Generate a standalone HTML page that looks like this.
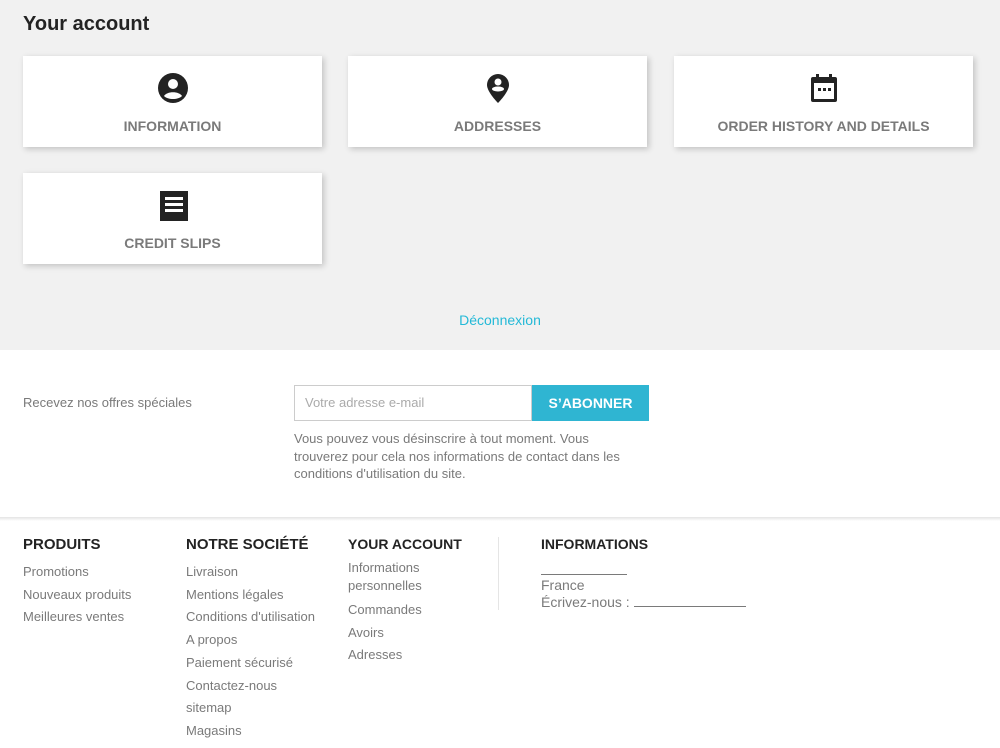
<!DOCTYPE html>
<html><head><meta charset="utf-8"><style>
*{margin:0;padding:0;box-sizing:border-box}
body{width:1000px;height:748px;overflow:hidden;font-family:"Liberation Sans",sans-serif;background:#fff;color:#7a7a7a}
.top{position:absolute;left:0;top:0;width:1000px;height:350px;background:#f1f1f1}
h1{position:absolute;left:23px;top:13px;font-size:20px;color:#232323;font-weight:bold}
.card{position:absolute;width:299px;height:91px;background:#fff;box-shadow:2px 2px 6px rgba(0,0,0,.2);text-align:center}
.card svg{position:absolute;left:50%;top:16px;margin-left:-16px}
.card span{position:absolute;left:0;right:0;top:62px;font-size:14px;font-weight:bold;color:#7a7a7a}
.link{position:absolute;left:0;width:1000px;top:312px;text-align:center;color:#24b9d7;font-size:14px}
.abs{position:absolute}
.ft h4{font-size:15px;color:#232323;font-weight:bold;margin-bottom:8px;white-space:nowrap}
.ft a{display:block;font-size:13px;color:#7a7a7a;line-height:22.7px}
</style></head><body>
<div class="top">
<h1>Your account</h1>
<div class="card" style="left:23px;top:56px"><svg width="32" height="32" viewBox="0 0 32 32"><circle cx="16" cy="16" r="15" fill="#232323"/><circle cx="16" cy="12" r="5" fill="#fff"/><path d="M7 24c3-5 15-5 18 0c-4 4-14 4-18 0z" fill="#fff"/></svg><span>INFORMATION</span></div>
<div class="card" style="left:348px;top:56px"><svg width="32" height="32" viewBox="0 0 32 32"><path d="M16 2a11 11 0 0 1 11 11c0 7-11 18-11 18S5 20 5 13A11 11 0 0 1 16 2z" fill="#232323"/><circle cx="16" cy="10" r="3.5" fill="#fff"/><ellipse cx="16" cy="17" rx="6" ry="2.5" fill="#fff"/></svg><span>ADDRESSES</span></div>
<div class="card" style="left:674px;top:56px"><svg width="32" height="32" viewBox="0 0 32 32"><rect x="3" y="5" width="26" height="25" rx="2" fill="#232323"/><rect x="6" y="11" width="20" height="16" fill="#fff"/><rect x="8" y="2" width="3" height="6" fill="#232323"/><rect x="21" y="2" width="3" height="6" fill="#232323"/><rect x="10" y="16" width="3" height="3" fill="#232323"/><rect x="15" y="16" width="3" height="3" fill="#232323"/><rect x="20" y="16" width="3" height="3" fill="#232323"/></svg><span>ORDER HISTORY AND DETAILS</span></div>
<div class="card" style="left:23px;top:173px"><svg width="32" height="32" viewBox="0 0 32 32"><rect x="3" y="2" width="28" height="30" fill="#232323"/><rect x="8" y="8" width="18" height="3" fill="#fff"/><rect x="8" y="14" width="18" height="3" fill="#fff"/><rect x="8" y="20" width="18" height="3" fill="#fff"/></svg><span>CREDIT SLIPS</span></div>
<div class="link">Déconnexion</div>
</div>
<div class="abs" style="left:23px;top:395px;font-size:13px;color:#7a7a7a">Recevez nos offres spéciales</div>
<div class="abs" style="left:294px;top:385px;width:238px;height:36px;border:1px solid #ccc;font-size:13px;color:#aaa;padding:9px 10px">Votre adresse e-mail</div>
<div class="abs" style="left:532px;top:385px;width:117px;height:36px;background:#2fb5d2;color:#fff;font-weight:bold;font-size:14px;text-align:center;line-height:36px">S’ABONNER</div>
<div class="abs" style="left:294px;top:430px;width:345px;font-size:13px;line-height:17.5px;color:#7a7a7a">Vous pouvez vous désinscrire à tout moment. Vous<br>trouverez pour cela nos informations de contact dans les<br>conditions d'utilisation du site.</div>
<div class="abs" style="left:0;top:517px;width:1000px;height:4px;background:linear-gradient(#e4e4e4,#fff)"></div>
<div class="abs ft" style="left:23px;top:536px"><h4>PRODUITS</h4><a>Promotions</a><a>Nouveaux produits</a><a>Meilleures ventes</a></div>
<div class="abs ft" style="left:186px;top:536px"><h4>NOTRE SOCIÉTÉ</h4><a>Livraison</a><a>Mentions légales</a><a>Conditions d'utilisation</a><a>A propos</a><a>Paiement sécurisé</a><a>Contactez-nous</a><a>sitemap</a><a>Magasins</a></div>
<div class="abs ft" style="left:348px;top:536px;width:100px"><h4 style="font-size:14px;margin-bottom:7px">YOUR ACCOUNT</h4><a style="line-height:18px">Informations personnelles</a><a style="margin-top:4px">Commandes</a><a>Avoirs</a><a>Adresses</a></div>
<div class="abs" style="left:498px;top:537px;width:1px;height:73px;background:#e5e5e5"></div>
<div class="abs ft" style="left:541px;top:536px;font-size:14px;color:#7a7a7a;line-height:17px"><h4 style="font-size:14px;margin-bottom:21px">INFORMATIONS</h4><div style="width:86px;border-top:1px solid #7a7a7a;margin-top:0;margin-bottom:2px"></div>France<br>Écrivez-nous : <span style="display:inline-block;width:112px;border-bottom:1px solid #7a7a7a"></span></div>
</body></html>
